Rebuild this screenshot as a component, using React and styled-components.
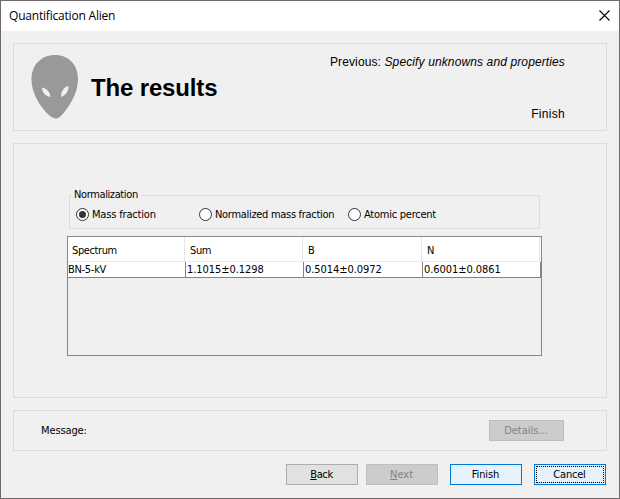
import React from "react";
import styled, { createGlobalStyle, css } from "styled-components";

const Global = createGlobalStyle`
  * { box-sizing: border-box; }
  body { margin: 0; background: #f0f0f0; color: #000; }
`;
const Dialog = styled.main`
  width: 620px; height: 499px; background: #f0f0f0; border: 1px solid #6e6a6b;
  display: flex; flex-direction: column; overflow: hidden;
  font: 11px/14px "DejaVu Sans Condensed", "DejaVu Sans", sans-serif;
  font-stretch: condensed;
`;
const Text = styled.span`
  white-space: pre;
  letter-spacing: ${(p) => p.$track || 0}px;
`;
const TitleBar = styled.header`
  height: 30px; flex: none; background: #fff; padding: 0 9px 2px 8px;
  display: flex; align-items: center; justify-content: space-between;
  font: 12px/16px "Open Sans", sans-serif;
  ${Text} { padding-top: 2px; }
`;
const Content = styled.div`
  flex: 1; padding: 12px; display: flex; flex-direction: column; gap: 12px;
`;
const Panel = styled.section`
  border: 1px solid #dcdcdc; flex: none;
`;
const Banner = styled(Panel)`
  height: 88px; padding: 10px 41px 8px 17px; display: flex;
  font-family: "Liberation Sans", sans-serif;
`;
const Heading = styled.h1`
  margin: 20px 0 0 12px; font-size: 24px; line-height: 28px; letter-spacing: -0.15px;
  white-space: nowrap; flex: 1;
`;
const Steps = styled.div`
  display: flex; flex-direction: column; justify-content: space-between; align-items: flex-end;
  font-size: 12px; line-height: 16px;
`;
const Results = styled(Panel)`
  height: 255px; padding: 44px 64px 0 53px;
`;
const Group = styled.fieldset`
  margin: 0 2px 0; height: 41px; border: 1px solid #dcdcdc; padding: 0; min-width: 0;
  legend { margin-left: 2px; padding: 0 3px 0 2px; height: 14px; }
`;
const Radios = styled.div`
  display: grid; grid-template-columns: 123px 149px auto; padding: 5px 0 0 6px;
`;
const Radio = styled.label`
  display: flex; align-items: center; gap: 3px; height: 15px;
`;
const Dot = styled.span`
  width: 13px; height: 13px; border: 1px solid #333; border-radius: 50%; background: #fff;
  display: grid; place-items: center; flex: none;
  ${(p) => p.$on && css`&::after { content: ""; width: 7px; height: 7px; border-radius: 50%; background: #333; }`}
`;
const TableBox = styled.div`
  margin-top: 7px; width: 475px; height: 120px; border: 1px solid #828790;
`;
const Row = styled.div`
  display: grid; grid-template-columns: 118px 118px 119px 118px; background: #fff;
`;
const HeadRow = styled(Row)`
  height: 25px; border-bottom: 1px solid #e8e8e8;
`;
const DataRow = styled(Row)`
  height: 16px; border-bottom: 1px solid #828282;
`;
const HeadCell = styled.div`
  padding: 7px 0 0 ${(p) => (p.$first ? 4 : 5)}px; margin: 0 1px 0 ${(p) => (p.$first ? 0 : -1)}px;
  border-right: 1px solid #e5e5e5;
`;
const Cell = styled.div`
  border-right: 1px solid #828282; padding: 1px 0 0 ${(p) => (p.$first ? 0 : 1)}px; line-height: 14px;
`;
const MessageBar = styled(Panel)`
  height: 41px; padding: 0 42px 0 27px; display: flex; align-items: center; justify-content: space-between;
`;
const tones = {
  normal: css`background: #e1e1e1; border-color: #adadad;`,
  disabled: css`background: #ccc; border-color: #bfbfbf; color: #838383;`,
  primary: css`background: #e5f1fb; border-color: #0078d7;`,
};
const Button = styled.button`
  width: ${(p) => p.$w || 72}px; height: 21px; padding: 1px 1px 0 0; border: 1px solid; font: inherit; color: #000;
  display: flex; align-items: center; justify-content: center; position: relative;
  ${(p) => tones[p.$tone || "normal"]}
  ${(p) => p.$focused && css`&::after { content: ""; position: absolute; inset: 1px; border: 1px dotted #000; }`}
`;
const Actions = styled.footer`
  display: flex; justify-content: flex-end; margin-top: 1px; padding-right: 1px;
  ${Button} + ${Button} { margin-left: 8px; }
  ${Button}:nth-child(n + 3) { margin-left: 12px; }
`;
const CloseIcon = () => (
  <svg width="11" height="11" viewBox="0 0 11 11"><path d="M.5 .5l10 10M10.500 .5l-10 10" stroke="#000" strokeWidth="1.1" /></svg>
);
const Alien = () => (
  <svg width="48" height="66" viewBox="0 0 48 66">
    <path fill="#999" d="M24 1C35 1 47 8 47 25C47 37 41 48 35 56C31 61 28 64.500 25 64.500C21 64.500 15 59 10 52C4 44 .5 33 .5 26C.5 9 12 1 24 1Z" />
    <path fill="#f0f0f0" d="M11 33.500C16 34.500 19 38 19.500 43C14 42 11 38 11 33.500ZM37.500 32C33 33 30 37 30 43C35 41 37.500 37 37.500 32Z" />
  </svg>
);
const options = [["Mass fraction", -0.17], ["Normalized mass fraction", -0.3], ["Atomic percent", -0.24]];
const columns = [["Spectrum", -0.4], ["Sum", -0.4], ["B", 0], ["N", 0]];
const values = ["BN-5-kV", "1.1015±0.1298", "0.5014±0.0972", "0.6001±0.0861"];

export default function App() {
  return (
    <Dialog>
      <Global />
      <TitleBar><Text $track={-0.2}>Quantification Alien</Text><CloseIcon /></TitleBar>
      <Content>
        <Banner>
          <Alien />
          <Heading>The results</Heading>
          <Steps>
            <Text $track={0.12}>Previous: <i>Specify unknowns and properties</i></Text>
            <Text $track={0.3}>Finish</Text>
          </Steps>
        </Banner>
        <Results>
          <Group>
            <legend><Text $track={-0.38}>Normalization</Text></legend>
            <Radios>
              {options.map(([label, track], i) => (
                <Radio key={label}><Dot $on={i === 0} /><Text $track={track}>{label}</Text></Radio>
              ))}
            </Radios>
          </Group>
          <TableBox>
            <HeadRow>
              {columns.map(([label, track], i) => (
                <HeadCell key={label} $first={i === 0}><Text $track={track}>{label}</Text></HeadCell>
              ))}
            </HeadRow>
            <DataRow>
              {values.map((value, i) => (
                <Cell key={value} $first={i === 0}><Text $track={i === 0 ? -0.3 : -0.06}>{value}</Text></Cell>
              ))}
            </DataRow>
          </TableBox>
        </Results>
        <MessageBar>
          <Text $track={-0.12}>Message:</Text>
          <Button $w={75} $tone="disabled"><Text>Details...</Text></Button>
        </MessageBar>
        <Actions>
          <Button><Text $track={-0.4}><u>B</u>ack</Text></Button>
          <Button $tone="disabled"><Text><u>N</u>ext</Text></Button>
          <Button $tone="primary"><Text $track={-0.1}>Finish</Text></Button>
          <Button $tone="primary" $focused><Text $track={-0.2}>Cancel</Text></Button>
        </Actions>
      </Content>
    </Dialog>
  );
}
